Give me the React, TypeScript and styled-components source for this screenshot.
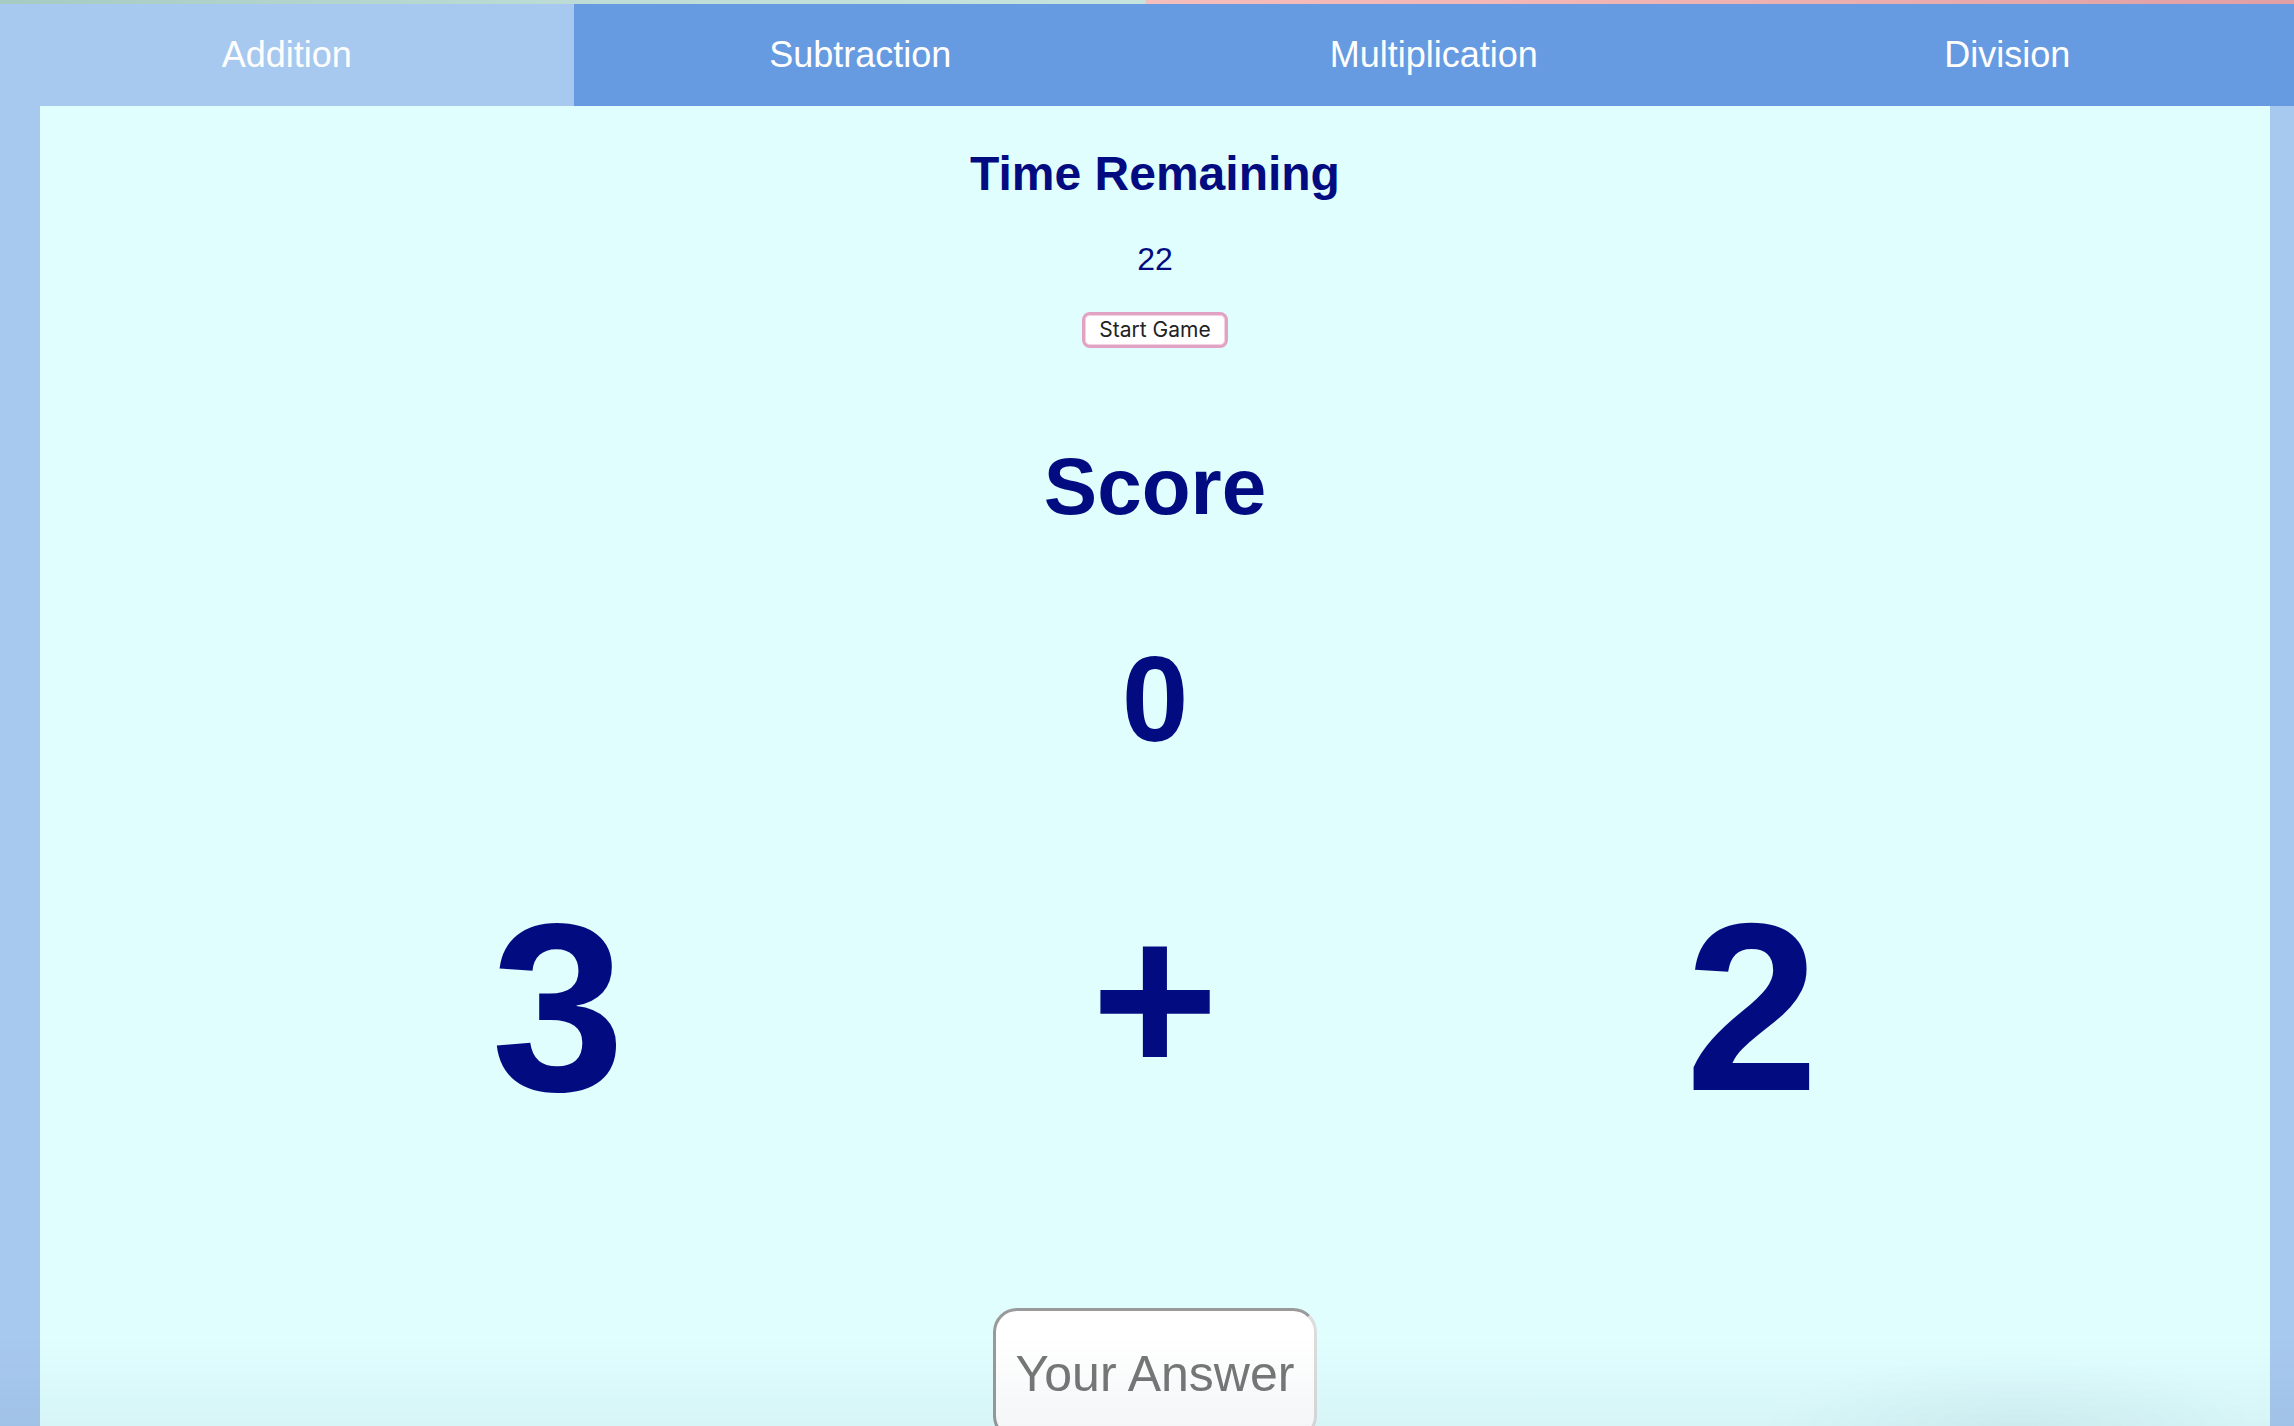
import React from "react";
import styled, { createGlobalStyle } from "styled-components";

const GlobalStyle = createGlobalStyle`
  html, body {
    margin: 0;
    padding: 0;
    background: #a8c9ef;
    font-family: "Liberation Sans", Arial, Helvetica, sans-serif;
    overflow: hidden;
  }
  * { box-sizing: border-box; }
`;

const Page = styled.div`
  display: flex;
  flex-direction: column;
  min-height: 1426px;
`;

const TopStrip = styled.div`
  height: 4px;
  background: linear-gradient(
    90deg,
    #a6cbc3 0%,
    #bcdcd5 25%,
    #c6e4dd 49.9%,
    #f5bdbb 50%,
    #efb2b2 75%,
    #df9fa5 100%
  );
`;

const NavBar = styled.nav`
  display: grid;
  grid-template-columns: repeat(4, 1fr);
  height: 102px;
  background: #669be2;
`;

const Tab = styled.div<{ $active?: boolean }>`
  display: flex;
  align-items: center;
  justify-content: center;
  color: #ffffff;
  font-size: 36px;
  background: ${(p) => (p.$active ? "#a8c9ef" : "transparent")};
`;

const Frame = styled.main`
  flex: 1;
  display: flex;
  padding: 0 24px 0 40px;
`;

const Panel = styled.section`
  flex: 1;
  display: flex;
  flex-direction: column;
  align-items: center;
  background: #e1feff;
  color: #020b80;
`;

const Title = styled.h2`
  margin: 44px 0 0;
  font-size: 48px;
  line-height: 48px;
  font-weight: 700;
`;

const Timer = styled.div`
  margin-top: 45px;
  font-size: 32px;
  line-height: 32px;
`;

const StartButton = styled.button`
  margin-top: 37px;
  width: 146px;
  height: 36px;
  padding: 0;
  background: #ffffff;
  border: 3px solid #e2a2c3;
  border-radius: 8px;
  color: #222222;
  font-family: Inter, "Noto Sans", sans-serif;
  font-size: 21px;
  line-height: 28px;
  box-shadow: inset 0 0 0 1px #f3d3e2;
`;

const ScoreLabel = styled.h1`
  margin: 99px 0 0;
  font-size: 80px;
  line-height: 80px;
  font-weight: 700;
`;

const ScoreValue = styled.div`
  margin-top: 112px;
  font-size: 120px;
  line-height: 120px;
  font-weight: 700;
`;

const Equation = styled.div`
  margin-top: 128px;
  display: flex;
  justify-content: center;
  height: 240px;
`;

const Term = styled.span<{ $operator?: boolean }>`
  width: 597px;
  text-align: center;
  font-size: ${(p) => (p.$operator ? "218px" : "240px")};
  line-height: 240px;
  font-weight: 700;
  margin-top: ${(p) => (p.$operator ? "-8px" : "0")};
`;

const AnswerInput = styled.input`
  margin-top: 181px;
  width: 324px;
  height: 132px;
  padding: 0 10px;
  background: #ffffff;
  border: 3px solid;
  border-color: #9a9a9a #dcdcdc #dcdcdc #9a9a9a;
  border-radius: 24px;
  font-family: "Liberation Sans", Arial, sans-serif;
  font-size: 50px;
  text-align: center;
  color: #333;
  outline: none;
  &::placeholder {
    color: #777777;
  }
`;

const BottomShade = styled.div`
  position: fixed;
  left: 0;
  right: 0;
  bottom: 0;
  height: 90px;
  pointer-events: none;
  background:
    radial-gradient(ellipse 260px 70px at 88% 100%, rgba(0, 50, 70, 0.05), transparent 100%),
    linear-gradient(to bottom, rgba(0, 50, 70, 0), rgba(0, 50, 70, 0.045));
`;

export default function App() {
  return (
    <>
      <GlobalStyle />
      <Page>
        <TopStrip />
        <NavBar>
          <Tab $active>Addition</Tab>
          <Tab>Subtraction</Tab>
          <Tab>Multiplication</Tab>
          <Tab>Division</Tab>
        </NavBar>
        <Frame>
          <Panel>
            <Title>Time Remaining</Title>
            <Timer>22</Timer>
            <StartButton>Start Game</StartButton>
            <ScoreLabel>Score</ScoreLabel>
            <ScoreValue>0</ScoreValue>
            <Equation>
              <Term>3</Term>
              <Term $operator>+</Term>
              <Term>2</Term>
            </Equation>
            <AnswerInput placeholder="Your Answer" />
          </Panel>
        </Frame>
      </Page>
      <BottomShade />
    </>
  );
}
